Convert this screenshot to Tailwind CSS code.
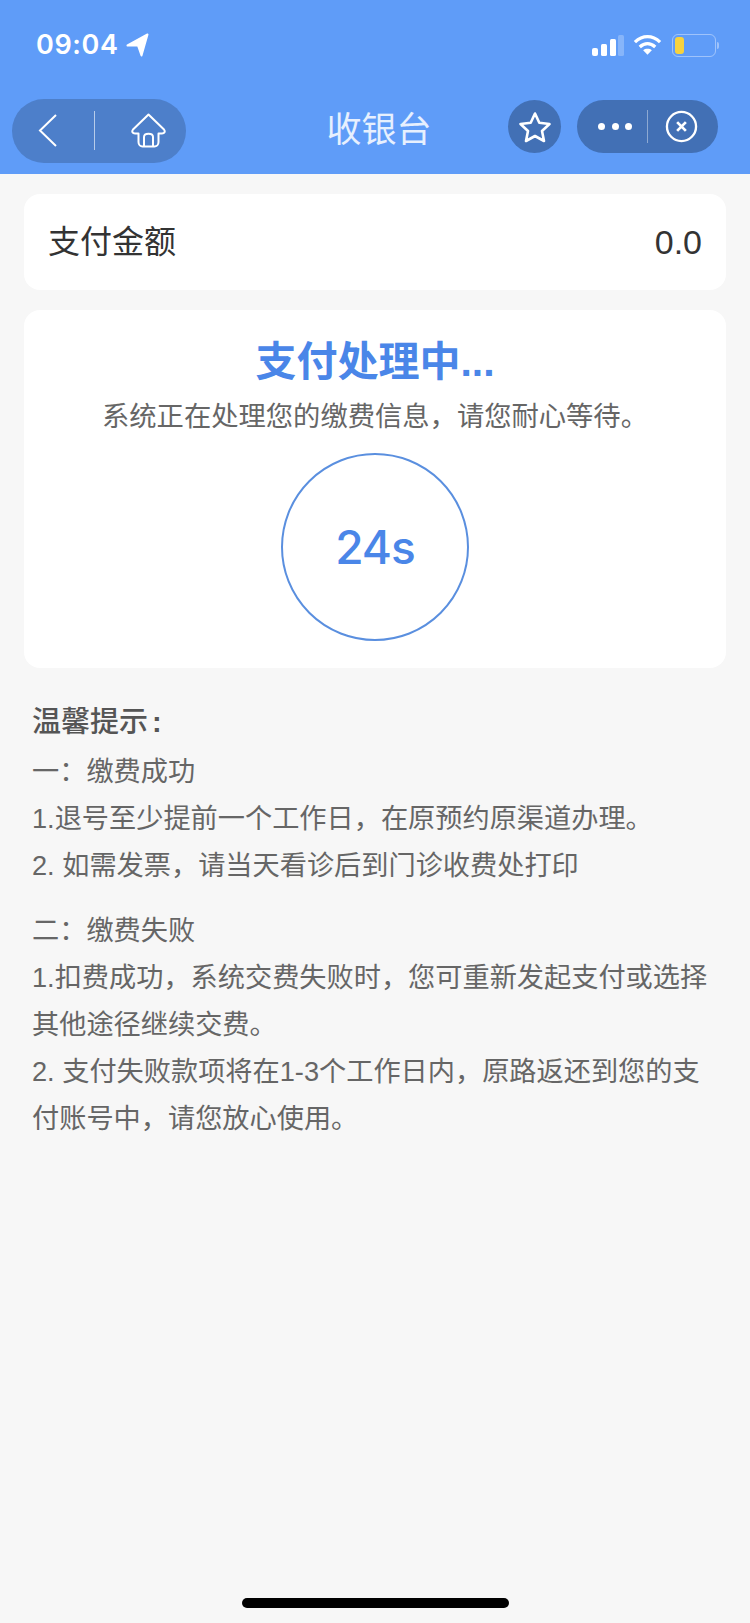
<!DOCTYPE html>
<html lang="zh-CN">
<head>
<meta charset="UTF-8">
<meta name="viewport" content="width=device-width, initial-scale=1.0">
<title>收银台</title>
<script src="https://cdn.jsdelivr.net/npm/@tailwindcss/browser@4"></script>
</head>
<body class="bg-[#f7f7f7] font-['Liberation_Sans','Noto_Sans_CJK_SC',sans-serif]">
<div class="relative w-[750px] h-[1623px] overflow-hidden">

  <!-- header -->
  <div class="bg-[#5f9cf8] h-[174px] text-white">
    <div class="flex items-center justify-between h-[90px] pl-[36px] pr-[31px]">
      <div class="flex items-center gap-[8px]">
        <span class="font-['Inter'] font-semibold text-[27px] tracking-[0.6px]">09:04</span>
        <svg width="23" height="24" viewBox="0 0 23 24" fill="#fff" stroke="#fff" stroke-width="2" stroke-linejoin="round"><path d="M21.500 1.500 1.500 12.500H12L15.500 22.500z"/></svg>
      </div>
      <div class="flex items-center">
        <svg class="mr-[9px]" width="32" height="21" viewBox="0 0 32 21" fill="#fff"><rect x="0" y="13" width="6" height="8" rx="2"/><rect x="9" y="9" width="6" height="12" rx="1.500"/><rect x="18" y="4" width="6" height="17" rx="1.500"/><rect x="26" y="0" width="6" height="21" rx="1.500" fill-opacity=".25"/></svg>
        <svg class="mr-[10px]" width="29" height="22" viewBox="0 0 30 22" fill="none" stroke="#fff" stroke-width="3.400"><path d="M2 8c8-7.500 18-7.500 26 0"/><path d="M7 13c5-4.500 11-4.500 16 0"/><path d="M15 21l-4.500-4.500c2.500-2 6.500-2 9 0z" fill="#fff" stroke="none"/></svg>
        <div class="flex items-center">
          <div class="w-[44px] h-[23px] rounded-[6px] border border-white/40 p-[2px]">
            <div class="w-[9px] h-full rounded-[3px] bg-[#f7d23e]"></div>
          </div>
          <div class="w-[2px] h-[7px] rounded-r bg-white/40 ml-[1px]"></div>
        </div>
      </div>
    </div>
    <div class="relative flex items-center justify-between h-[84px] pl-[12px] pr-[32px]">
      <div class="flex items-center w-[174px] h-[64px] mt-[-3px] rounded-full bg-[#4d7fca]">
        <svg class="ml-[26px]" width="19" height="33" viewBox="0 0 19 33" fill="none" stroke="#fff" stroke-width="2"><path d="M18 1 2 16.500 18 32"/></svg>
        <div class="w-px h-[39px] bg-white/60 ml-[37px]"></div>
        <svg class="ml-[36px]" width="35" height="35" viewBox="0 0 35 35" fill="none" stroke="#fff" stroke-width="2" stroke-linejoin="round"><path d="M17.500 1.500 2 16.500c-1.500 2-.5 4 2 4h3.500v8.500c0 3 2 4.500 4 4.500h12c2 0 4-1.500 4-4.500v-8.500H31c2.500 0 3.500-2 2-4z"/><path d="M13 33.500V24c0-4.500 9-4.500 9 0v9.500"/></svg>
      </div>
      <div class="absolute left-[8px] right-0 top-[13px] text-center text-[35px] leading-[54px] text-white/85 pointer-events-none">收银台</div>
      <div class="flex items-center gap-[16px] mt-[-11px]">
        <div class="flex items-center justify-center w-[53px] h-[53px] rounded-full bg-[#4270b5]">
          <svg width="34" height="32" viewBox="0 0 34 32" fill="none" stroke="#fff" stroke-width="2.600" stroke-linejoin="round"><path d="M17 2.500 21.300 11.800 31.500 13 24 20 26 30 17 25 8 30 10 20 2.500 13 12.700 11.800z"/></svg>
        </div>
        <div class="flex items-center w-[141px] h-[53px] rounded-full bg-[#4270b5]">
          <div class="flex gap-[6.500px] ml-[21px]">
            <span class="w-[7px] h-[7px] rounded-full bg-white"></span>
            <span class="w-[7px] h-[7px] rounded-full bg-white"></span>
            <span class="w-[7px] h-[7px] rounded-full bg-white"></span>
          </div>
          <div class="w-px h-[33px] bg-white/40 ml-[15px]"></div>
          <svg class="ml-[17px]" width="33" height="33" viewBox="0 0 34 34" fill="none" stroke="#fff"><circle cx="17" cy="17" r="15" stroke-width="2.400"/><path d="m12.500 12.500 9 9M21.500 12.500l-9 9" stroke-width="2.800"/></svg>
        </div>
      </div>
    </div>
  </div>

  <!-- amount -->
  <div class="flex items-center justify-between mx-[24px] mt-[20px] h-[96px] rounded-[16px] bg-white px-[24px] text-[#333]">
    <span class="text-[32px]">支付金额</span>
    <span class="text-[34px]">0.0</span>
  </div>

  <!-- status -->
  <div class="flex flex-col items-center mx-[24px] mt-[20px] h-[358px] rounded-[16px] bg-white">
    <div class="mt-[22px] text-[41px] leading-[60px] font-semibold text-[#4a86e8]">支付处理中...</div>
    <div class="mt-[5px] text-[27.300px] leading-[40px] text-[#666]">系统正在处理您的缴费信息&#65292;请您耐心等待。</div>
    <div class="flex items-center justify-center mt-[16px] w-[188px] h-[188px] rounded-full border-2 border-[#5a8fdf] font-['Inter'] text-[46px] tracking-[-1px] font-medium text-[#4a86e8]">24s</div>
  </div>

  <!-- tips -->
  <div class="px-[32px] pt-[31px] text-[27.200px] leading-[47px] text-[#666]">
    <div class="text-[29px] font-medium text-[#555]">温馨提示<span class="ml-[4px] font-bold">:</span></div>
    <div class="mt-[2px]">一&#65306;缴费成功</div>
    <div>1.退号至少提前一个工作日&#65292;在原预约原渠道办理。</div>
    <div>2. 如需发票&#65292;请当天看诊后到门诊收费处打印</div>
    <div class="mt-[18px]">二&#65306;缴费失败</div>
    <div>1.扣费成功&#65292;系统交费失败时&#65292;您可重新发起支付或选择其他途径继续交费。</div>
    <div>2. 支付失败款项将在1-3个工作日内&#65292;原路返还到您的支付账号中&#65292;请您放心使用。</div>
  </div>

  <div class="absolute left-[242px] top-[1598px] w-[267px] h-[10px] rounded-full bg-black"></div>
</div>
</body>
</html>
